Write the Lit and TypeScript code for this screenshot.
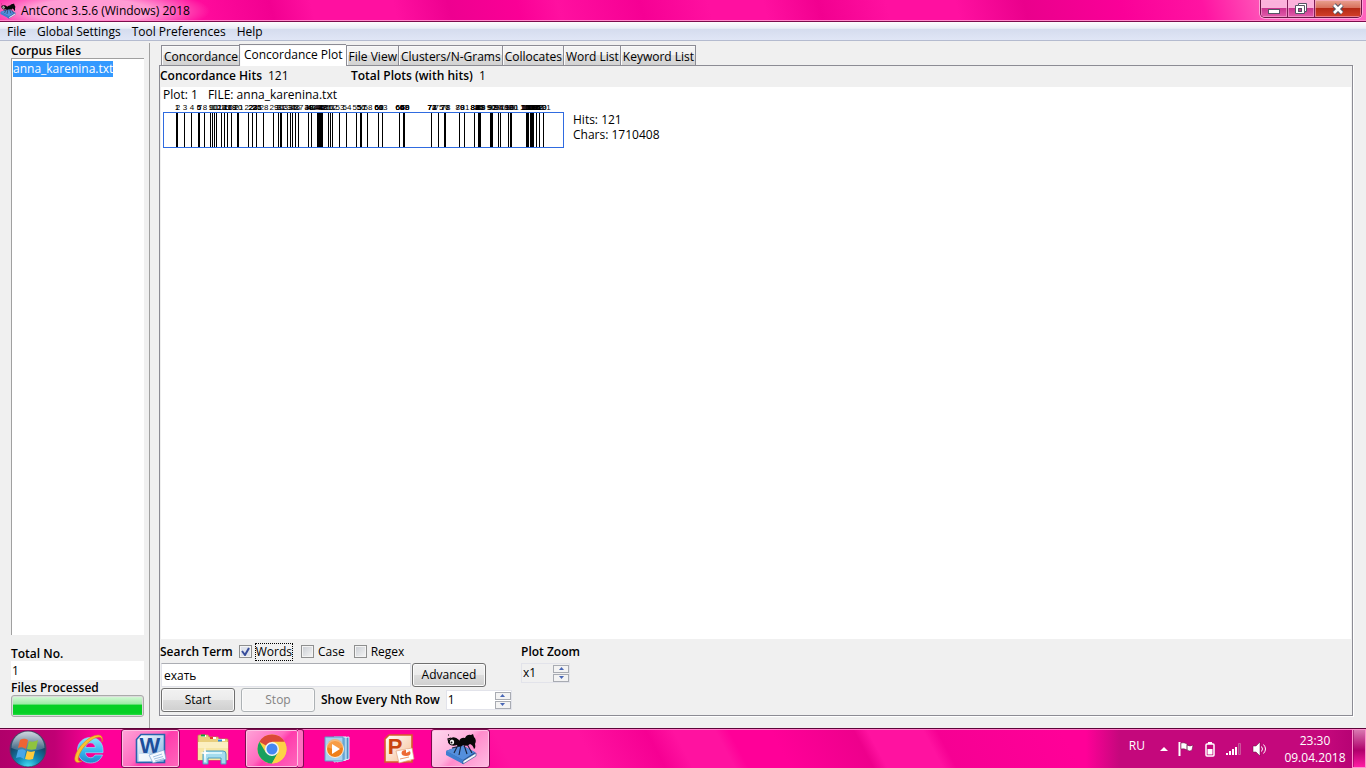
import { LitElement, html, svg, css } from "lit";
import { customElement, state } from "lit/decorators.js";

const HITS = [
  176, 177, 184, 191, 198, 198, 199, 204, 210, 212, 214, 216, 221, 221, 224, 227, 227, 231, 231, 237, 238,
  248, 252, 252, 256, 256, 256, 263, 273, 278, 280, 281, 287, 290, 292, 295, 298, 308, 308, 308, 311, 311,
  317, 318, 319, 320, 321, 322, 322, 328, 330, 332, 339, 346, 356, 360, 361, 367, 378, 378, 378, 378, 382,
  399, 399, 399, 403, 404, 404, 404, 431, 431, 431, 431, 438, 444, 444, 445, 459, 459, 464, 474, 474, 474,
  478, 479, 479, 480, 480, 490, 491, 491, 492, 498, 498, 500, 508, 508, 510, 510, 511, 526, 526, 527, 527,
  528, 528, 530, 530, 531, 531, 532, 532, 533, 533, 533, 536, 536, 539, 539, 543,
].map((x) => x - 163);

const TABS = ["Concordance", "Concordance Plot", "File View", "Clusters/N-Grams", "Collocates", "Word List", "Keyword List"];

const antIcon = (size: number) => html`<svg width=${size} height=${size} viewBox="0 0 32 32" aria-hidden="true">
  <path d="M1 18 17 12 31 20 18 31Z" fill="#24579f" />
  <path d="M1 18v4l17 9v-4Z" fill="#3f7fd0" />
  <path d="m18 28 13-8v3l-13 8Z" fill="#f4f7fb" stroke="#234a86" stroke-width=".6" />
  <path d="M1 18 16 12l14 7-12 8Z" fill="#548fdc" />
  <path d="M13 12 9 20M16 12l-2 10M19 12l3 9M22 11l5 9M15 13l-8 2" stroke="#18253c" stroke-width="1.100" fill="none" />
  <path d="M14 8q2-4 6-3 2-4 6-3l2-1 1 3q3 3 1 7 1 4-1 5-1-4-4-5-3 3-7 1-3 3-6 0-5 2-8-1-2-3 2-6 4-2 8 2Z" fill="#080808" />
  <path d="M4 10 3 6l3-1M3 2h1" fill="none" stroke="#080808" stroke-width="1.200" />
  <ellipse cx="7" cy="9" rx="2.200" ry="2.600" fill="#f8f8f8" />
  <circle cx="6.500" cy="9.400" r="1" fill="#111" />
</svg>`;

const orb = html`<svg width="38" height="38" viewBox="0 0 38 38" aria-hidden="true">
  <defs>
    <radialGradient id="orb" cx=".5" cy="1" r=".9">
      <stop offset="0" stop-color="#48e4f6" /><stop offset=".35" stop-color="#1289b8" />
      <stop offset=".75" stop-color="#174468" /><stop offset="1" stop-color="#365a7b" />
    </radialGradient>
    <linearGradient id="gloss" x2="0" y2="1"><stop offset="0" stop-color="#fff" stop-opacity=".75" /><stop offset="1" stop-color="#fff" stop-opacity=".15" /></linearGradient>
  </defs>
  <circle cx="19" cy="19" r="18" fill="url(#orb)" stroke="#50405f" />
  <path d="M2.500 18a16.500 16.500 0 0 1 33 0C27 22 11 22 2.500 18Z" fill="url(#gloss)" />
  <path d="M11 10c3-2 6-1 8 0l-2 9c-3-2-6-2-8-1Z" fill="#ef6434" />
  <path d="M20 11c3 1 5 1 9-1l-2 9c-3 1-6 1-9 0Z" fill="#8fc43f" />
  <path d="M9 20c3-1 6-1 8 1l-2 8c-3-2-5-2-8-1Z" fill="#48a6e8" />
  <path d="M18 21c3 1 5 1 8 0l-2 8c-3 1-5 1-8 0Z" fill="#ffcb3c" />
</svg>`;

const ieIcon = html`<svg width="32" height="32" viewBox="0 0 32 32" aria-hidden="true">
  <defs><linearGradient id="ie" x2="0" y2="1"><stop offset="0" stop-color="#8ae4fc" /><stop offset=".55" stop-color="#35b6ee" /><stop offset="1" stop-color="#1d86cc" /></linearGradient></defs>
  <path d="M30 17.500c0-8-5-13-12.500-13S4.500 10 4.500 17 9.500 30 17.500 30c6 0 10-3 12-8h-7.500c-1 2-2.500 2.700-4.500 2.700-3 0-5-2-5-5H30ZM12.500 14.500c.4-3 2.300-4.700 5-4.700s4.500 1.700 4.900 4.700Z" fill="url(#ie)" fill-rule="evenodd" stroke="#8fe0fa" stroke-width=".7" />
  <path d="M29 9c1-4 0-7-4-7C17 2 4 14 2 24c-1 5 2 7 7 4-3 1-4.500-.5-3.500-4C8 15 19 4 26 4c2.500 0 3.400 2 3 5Z" fill="#fdc130" stroke="#d88a10" stroke-width=".6" />
</svg>`;

const wordIcon = html`<svg width="32" height="32" viewBox="0 0 32 32" aria-hidden="true">
  <defs><linearGradient id="wd" x2="1" y2="1"><stop offset="0" stop-color="#fff" /><stop offset="1" stop-color="#7fb2e4" /></linearGradient></defs>
  <path d="M6 1.500h23.500v28h-28v-23Z" fill="url(#wd)" stroke="#2763ad" stroke-width="1.600" />
  <path d="M4 21h20v7H4Z" fill="#fff" opacity=".8" />
  <text x="15" y="20" text-anchor="middle" class="glyph word">W</text>
  <path d="m14 22 15-5 2 9-13 4Z" fill="#f5f9ff" stroke="#7ba3ce" stroke-width=".7" />
  <path d="m18 24 9-3M19 26l9-2.500M20 28l9-2.500" stroke="#8db3dc" stroke-width=".8" />
</svg>`;

const folderIcon = html`<svg width="34" height="32" viewBox="0 0 34 32" aria-hidden="true">
  <path d="M2 3q0-1 1-1h9l1 2h9l1 2h8q1 0 1 1v20H2Z" fill="#e9cf7d" stroke="#b99a48" stroke-width=".8" />
  <path d="M5 2h5v2H5ZM14 4h6v2h-6ZM22 6h7v2h-7Z" fill="#fff" />
  <path d="M5 1.500h4v2H5Z" fill="#13a431" /><path d="M14 4h3v2h-3Z" fill="#e33e25" /><path d="M22 6.500h4v2h-4Z" fill="#2a8bdc" />
  <path d="M2 9h30v18H2Z" fill="#f7e6a4" /><path d="M2 9h30v6H2Z" fill="#fbefc0" />
  <path d="M7 31V21q0-3 3-3h17q3 0 3 3v10h-5v-6H12v6Z" fill="#a4dcee" stroke="#4d9fbe" />
  <path d="M9 29v-8q0-1 2-1h15" stroke="#e8fbff" stroke-width="1.500" fill="none" />
  <path d="m9 14 1 5 4 1-4 1-1 5-1-5-4-1 4-1Z" fill="#fff" />
</svg>`;

const chromeIcon = html`<svg width="32" height="32" viewBox="0 0 32 32" aria-hidden="true">
  <circle cx="16" cy="16" r="14.500" fill="#fdd246" />
  <path d="M16 16 3.400 8.800A14.500 14.500 0 0 1 28.600 8.800H16Z" fill="#db4839" />
  <path d="M3.400 8.800A14.500 14.500 0 0 0 16 30.500L22 19.800 16 16 9.800 19.600Z" fill="#18a05e" />
  <path d="M16 9.200h12.800A14.500 14.500 0 0 1 16 30.500l6-11Z" fill="#fdd246" />
  <circle cx="16" cy="16" r="7" fill="#f4f4f4" /><circle cx="16" cy="16" r="5.500" fill="#4587f3" />
</svg>`;

const playerIcon = html`<svg width="28" height="28" viewBox="0 0 28 28" aria-hidden="true">
  <path d="m14 3 12-1v22l-12 3Z" fill="#4c8fc4" stroke="#dff1fd" />
  <path d="m11 2 12 0v23l-12 2Z" fill="#72b0dc" stroke="#eaf7ff" />
  <path d="M2 2h18v24H2Z" fill="#a9d2ee" stroke="#5c9bc7" />
  <circle cx="12" cy="14" r="8.500" fill="#f08019" stroke="#fff0dc" />
  <path d="M4 12a8 8 0 0 1 16 0q-8 4-16 0" fill="#f9a95a" opacity=".7" />
  <path d="m9 9 8 5-8 5Z" fill="#fff" />
</svg>`;

const pptIcon = html`<svg width="32" height="32" viewBox="0 0 32 32" aria-hidden="true">
  <defs><linearGradient id="pp" x2="1" y2="1"><stop offset="0" stop-color="#fff" /><stop offset="1" stop-color="#f7bd91" /></linearGradient></defs>
  <path d="M6 2h23v27H2V6Z" fill="url(#pp)" stroke="#d65d28" stroke-width="1.600" />
  <text x="12" y="21" text-anchor="middle" class="glyph ppt">P</text>
  <path d="m13 18 16-3 2 11-15 4Z" fill="#fff" stroke="#e2a47e" stroke-width=".7" />
  <ellipse cx="23" cy="20" rx="4.500" ry="3" fill="#ed6a35" /><path d="M23 20v-4l4 2Z" fill="#fff" />
  <path d="m17 26 9-2" stroke="#ee9a70" />
</svg>`;

const stepper = html`<span class="arrows">
  <button aria-label="Increase"><svg width="5" height="3" viewBox="0 0 5 3"><path d="M0 3 2.500 0 5 3Z" fill="#4866b5" /></svg></button>
  <button aria-label="Decrease"><svg width="5" height="3" viewBox="0 0 5 3"><path d="M0 0h5L2.500 3Z" fill="#4866b5" /></svg></button>
</span>`;

@customElement("app-root")
export class AppRoot extends LitElement {
  @state() private active = 1;

  static styles = css`
    :host {
      display: flex;
      flex-direction: column;
      height: 100vh;
      overflow: hidden;
      background: #f0f0f0;
      color: #000;
      font: 12px/16px "Open Sans", "Noto Sans", sans-serif;
    }
    * { box-sizing: border-box; }
    button, input { font: inherit; color: inherit; margin: 0; }
    svg { display: block; flex: none; }
    .bold, b { font-weight: 600; }

    .titlebar {
      display: flex;
      justify-content: space-between;
      height: 22px;
      flex: none;
      border-bottom: 1px solid #7c0c4c;
      box-shadow: inset 0 -1px #ff86ca;
      background:
        radial-gradient(ellipse 120px 24px at 90px 11px, #ff9cd4 0 50%, #ff9cd400 100%),
        linear-gradient(75deg, #ff0b9c 0 15%, #f20091 20%, #ff10a0 23% 29%, #ee0090 33%, #fa0096 38%, #ff10a0 41%, #f60094 47%, #ff10a0 52% 56%, #f20090 60%, #ff10a0 65%, #ff10a0 70%, #ea008c 75%, #fa0098 82%, #ff14a2 88%, #ff5ebc 93%, #ff62be 100%);
    }
    .caption { display: flex; gap: 5px; line-height: 21px; }
    .caption svg { margin-top: 3px; }
    .winbtns {
      display: flex;
      height: 18px;
      margin-right: 4px;
      border: 1px solid #6a1747;
      border-top: 0;
      border-radius: 0 0 5px 5px;
      box-shadow: 0 0 0 1px #ffa6da;
      overflow: hidden;
    }
    .winbtns button {
      display: grid;
      place-items: center;
      width: 27px;
      padding: 0;
      border: 0;
      border-right: 1px solid #7c1c56;
      background: linear-gradient(#fbb2dc 0 48%, #c9368f 50%, #e25cab);
      box-shadow: inset 0 0 0 1px #ffb5de88;
    }
    .winbtns .close {
      width: 46px;
      border-right: 0;
      background: linear-gradient(#e9a392, #d8705c 46%, #b52a16 50%, #d4402a);
    }

    .menubar {
      display: flex;
      height: 19px;
      flex: none;
      gap: 11px;
      padding: 0 7px;
      border-bottom: 1px solid #b4bbcf;
      background: linear-gradient(#fdfdfe 0, #e9edf6 35%, #d5dcee 40%, #e0e6f6);
    }
    .menubar button { padding: 1px 0 0; border: 0; background: none; line-height: 18px; }

    .main { display: flex; flex: 1; min-height: 0; }
    .side {
      display: flex;
      flex-direction: column;
      width: 150px;
      flex: none;
      margin-top: 2px;
      padding: 0 5px 11px 11px;
      border-right: 1px solid #a0a0a0;
    }
    .side .bold { height: 15px; }
    .files {
      flex: 1;
      margin: 0 0 11px;
      padding: 2px 1px;
      border: solid #a0a0a0;
      border-width: 1px 0 0 1px;
      background: #fff;
      list-style: none;
    }
    .files span { display: inline-block; background: #3399ff; color: #fff; }
    .total {
      width: 100%;
      height: 19px;
      padding: 0 1px;
      border: 0;
      background: #fff;
    }
    progress {
      appearance: none;
      width: 100%;
      height: 22px;
      border: 1px solid #aaa;
      border-radius: 3px;
      padding: 1px;
      background: #dcdcdc;
    }
    progress::-webkit-progress-bar { background: #ddd; }
    progress::-webkit-progress-value {
      background: linear-gradient(#d2f7d4 0, #9ceba4 40%, #06d025 44%, #06d025 90%, #2cdc48);
    }

    .content {
      display: flex;
      flex-direction: column;
      flex: 1;
      min-width: 0;
      padding: 3px 13px 12px 9px;
    }
    .tabs { display: flex; align-items: flex-end; padding-left: 2px; height: 21px; }
    .tabs button {
      height: 20px;
      padding: 1px 1px 0 2px;
      border: 1px solid #8c8c94;
      border-right-width: 0;
      border-bottom: 0;
      background: linear-gradient(#f3f3f3 0 45%, #dedede 50%, #d2d2d2);
      box-shadow: inset 1px 1px #fafafa;
      line-height: 20px;
      white-space: nowrap;
    }
    .tabs button:last-child { border-right-width: 1px; }
    .tabs button.active {
      position: relative;
      height: 22px;
      margin-bottom: -1px;
      padding: 0 3px 1px 4px;
      background: #fff;
    }
    .panel {
      display: flex;
      flex-direction: column;
      flex: 1;
      border: 1px solid #8c8c94;
      box-shadow: 1px 1px #fff;
      min-height: 0;
    }
    .counts { display: grid; grid-template-columns: 108px 83px 128px auto; justify-content: start; height: 21px; line-height: 20px; }
    .canvas {
      flex: 1;
      margin: 0 1px;
      padding: 0 2px;
      background: #fff;
      overflow: hidden;
    }
    .plot-title { display: flex; gap: 10px; height: 16px; }
    .plot-row { display: flex; gap: 8px; }
    .plot-row svg { overflow: visible; }
    .plot-info { padding-top: 9px; line-height: 15px; }
    .tick { font: 8px "Liberation Sans", sans-serif; }
    .controls {
      display: grid;
      grid-template-columns: 361px auto;
      justify-content: start;
      align-items: start;
      padding: 4px 0 3px;
    }
    .row { display: flex; align-items: center; height: 17px; }
    .row label { display: flex; align-items: center; margin-right: 9px; }
    .row b { margin-right: 6px; }
    .row input {
      appearance: none;
      width: 13px;
      height: 13px;
      margin-right: 4px;
      border: 1px solid #8e8f8f;
      background: linear-gradient(135deg, #c8ccd2, #f6f6f6);
      box-shadow: inset 0 0 0 1px #f4f4f4;
    }
    .row input:checked {
      background: url("data:image/svg+xml,%3Csvg xmlns='http://www.w3.org/2000/svg' viewBox='0 0 11 11'%3E%3Cpath d='m2 5 3 4 4-7' fill='none' stroke='%23364c9b' stroke-width='2'/%3E%3C/svg%3E") #dfe3ec;
    }
    .row .focus { outline: 1px dotted #000; }
    .row2 { display: flex; gap: 1px; padding: 3px 0 1px 1px; }
    .query { width: 250px; height: 24px; padding: 0 2px; border: 1px solid #e2e3ea; border-top-color: #abadb3; background: #fff; outline: 0; }
    .push {
      width: 74px;
      height: 24px;
      padding: 0;
      border: 1px solid #707070;
      border-radius: 3px;
      background: linear-gradient(#f2f2f2, #ebebeb 48%, #dddddd 50%, #cfcfcf);
      box-shadow: inset 0 0 0 1px #fbfbfb;
    }
    .push:disabled { color: #838383; border-color: #adb2b5; background: #f4f4f4; }
    .row3 { display: flex; align-items: center; gap: 6px; padding-left: 1px; }
    .spin {
      display: flex;
      align-items: center;
      height: 20px;
      width: 66px;
      border: 1px solid #e2e3ea;
      background: #fff;
    }
    .spin input { flex: 1; width: 0; padding: 0 1px; border: 0; background: none; outline: 0; height: 16px; }
    .spin.zoom { width: 49px; background: #f0f0f0; margin-top: 3px; }
    .arrows { display: flex; flex-direction: column; gap: 1px; }
    .arrows button {
      display: grid;
      place-items: center;
      width: 16px;
      height: 8px;
      padding: 0;
      border: 1px solid #a8abb2;
      background: #f3f3f3;
    }

    .taskbar {
      display: flex;
      height: 40px;
      flex: none;
      padding-left: 8px;
      border-top: 1px solid #5c0438;
      box-shadow: inset 0 1px #ff7cc8;
      color: #fff;
      background:
        linear-gradient(90deg, #b0006a 0, #c00074 4%, #ff009600 7%, #ff009600 79.500%, #c4087c 82%, #c4087c 97%, #b00070),
        linear-gradient(62deg, #ff0098 0 34%, #ff12a0 37% 43%, #f60093 48%, #ff12a0 50% 53%, #ff0098 54% 57%, #ee008c 63%, #ff12a0 64% 68%, #f60093 69%, #ff0098 78%);
    }
    .taskbar > button {
      display: grid;
      place-items: center;
      width: 59px;
      height: 39px;
      margin-right: 3px;
      padding: 0;
      border: 1px solid transparent;
      background: none;
    }
    .taskbar > .start { width: 38px; margin-right: 13px; }
    .taskbar > .open {
      border-color: #7d0d50;
      border-radius: 3px;
      box-shadow: inset 0 0 0 1px #ffc0e4;
      background: linear-gradient(135deg, #ffa4d8, #ff6cc0 45%, #ff3cac 55%, #ff68bc);
    }
    .taskbar > .current { background: linear-gradient(135deg, #ffd8ef, #ffb2dd 45%, #ff8bcb 55%, #ffbce2); }
    .taskbar > .stack { position: relative; width: 54px; margin-right: 8px; }
    .taskbar > .stack::after {
      content: "";
      position: absolute;
      inset: -1px -6px -1px auto;
      width: 5px;
      border: 1px solid #7d0d50;
      border-left: 0;
      border-radius: 0 3px 3px 0;
      background: #ff6cc0;
    }
    .glyph { font-family: "Liberation Sans", sans-serif; font-weight: 700; }
    .word { font-size: 22px; fill: #1c4f9c; }
    .ppt { font-size: 22px; fill: #c9430f; }
    .tray { display: flex; margin-left: auto; align-items: center; gap: 10px; }
    .lang { margin: -6px 5px 0 0; }
    .clock { display: block; width: 74px; text-align: center; line-height: 17px; padding-top: 1px; }
    .taskbar .desktop {
      width: 14px;
      height: 39px;
      margin: 0 0 0 -10px;
      padding: 0;
      border: 1px solid #ff8fce;
      background: linear-gradient(#d878b0, #b0006c 55%, #ff1ca4);
      box-shadow: inset 1px 0 #84045080;
    }
  `;

  private plot() {
    return html`<svg width="402" height="45" viewBox="0 0 402 45" role="img" aria-label="Concordance plot">
      ${HITS.map((x, i) => svg`<text class="tick" x=${x + 1} y="7" text-anchor="middle">${i + 1}</text>`)}
      ${[...new Set(HITS)].map((x) => svg`<rect x=${x} y="10" width="1" height="34" fill="#000" />`)}
      <rect x=".5" y="9.500" width="400" height="35" fill="none" stroke="#2f6be0" />
    </svg>`;
  }

  render() {
    return html`
      <header class="titlebar">
        <div class="caption">${antIcon(16)}<span>AntConc 3.5.6 (Windows) 2018</span></div>
        <div class="winbtns">
          <button aria-label="Minimize"><svg width="12" height="14" viewBox="0 0 12 14"><rect x=".5" y="7.500" width="11" height="4" fill="#fff" stroke="#555565" /></svg></button>
          <button aria-label="Restore"><svg width="12" height="14" viewBox="0 0 12 14"><path d="M3.500 1.500h8v8h-2v2h-9v-8h3Z" fill="#fff" stroke="#555565" /><path d="M3.500 3.500h6v6" fill="none" stroke="#555565" /><rect x="3.500" y="6.500" width="3" height="3" fill="#c9368f" stroke="#555565" /></svg></button>
          <button class="close" aria-label="Close"><svg width="12" height="14" viewBox="0 0 12 14"><path d="m2 3 8 8m0-8-8 8" stroke="#555565" stroke-width="4.600" /><path d="m2 3 8 8m0-8-8 8" stroke="#fff" stroke-width="2.600" /></svg></button>
        </div>
      </header>
      <nav class="menubar">
        ${["File", "Global Settings", "Tool Preferences", "Help"].map((m) => html`<button>${m}</button>`)}
      </nav>
      <main class="main">
        <aside class="side">
          <span class="bold">Corpus Files</span>
          <ul class="files"><li><span>anna_karenina.txt</span></li></ul>
          <label class="bold" for="total">Total No.</label>
          <input id="total" class="total" .value=${"1"} readonly />
          <label class="bold" for="progress">Files Processed</label>
          <progress id="progress" value="1" max="1"></progress>
        </aside>
        <section class="content">
          <div class="tabs" role="tablist">
            ${TABS.map((t, i) => html`<button role="tab" aria-selected=${i === this.active} class=${i === this.active ? "active" : ""} @click=${() => (this.active = i)}>${t}</button>`)}
          </div>
          <div class="panel" role="tabpanel">
            <div class="counts"><b>Concordance Hits</b><span>121</span><b>Total Plots (with hits)</b><span>1</span></div>
            <div class="canvas">
              <div class="plot-title"><span>Plot: 1</span><span>FILE: anna_karenina.txt</span></div>
              <div class="plot-row">
                ${this.plot()}
                <div class="plot-info">Hits: 121<br />Chars: 1710408</div>
              </div>
            </div>
            <div class="controls">
              <div>
                <div class="row">
                  <b>Search Term</b>
                  <label><input type="checkbox" checked /><span class="focus">Words</span></label>
                  <label><input type="checkbox" />Case</label>
                  <label><input type="checkbox" />Regex</label>
                </div>
                <div class="row2">
                  <input class="query" aria-label="Search term" .value=${"ехать"} />
                  <button class="push">Advanced</button>
                </div>
                <div class="row3">
                  <button class="push">Start</button>
                  <button class="push" disabled>Stop</button>
                  <label class="bold" for="nth">Show Every Nth Row</label>
                  <span class="spin"><input id="nth" .value=${"1"} />${stepper}</span>
                </div>
              </div>
              <div>
                <div class="row"><label class="bold" for="zoom">Plot Zoom</label></div>
                <span class="spin zoom"><input id="zoom" .value=${"x1"} />${stepper}</span>
              </div>
            </div>
          </div>
        </section>
      </main>
      <footer class="taskbar">
        <button class="start" aria-label="Start menu">${orb}</button>
        <button aria-label="Internet Explorer">${ieIcon}</button>
        <button class="open" aria-label="Word">${wordIcon}</button>
        <button aria-label="Explorer">${folderIcon}</button>
        <button class="open stack" aria-label="Chrome">${chromeIcon}</button>
        <button aria-label="Media Player">${playerIcon}</button>
        <button aria-label="PowerPoint">${pptIcon}</button>
        <button class="open current" aria-label="AntConc">${antIcon(32)}</button>
        <div class="tray">
          <span class="lang">RU</span>
          <svg width="8" height="4" viewBox="0 0 8 4"><path d="M0 4 4 0l4 4Z" fill="#fff" /></svg>
          <svg width="16" height="16" viewBox="0 0 16 16"><path d="M1.500 1v14" stroke="#fff" stroke-width="2" /><path d="M3 2q3-1 6 1v6q-3-2-6-1ZM9 4q3 2 6 0l-1 5q-2 2-5 0Z" fill="#fff" stroke="#60103f" stroke-width=".5" /></svg>
          <svg width="12" height="16" viewBox="0 0 12 16"><path d="M4 1h4v2H4Z" fill="#fff" /><rect x="2" y="3" width="8" height="12" rx="1" fill="none" stroke="#fff" stroke-width="1.500" /><path d="M3.500 8h5v5.500h-5Z" fill="#fff" /></svg>
          <svg width="16" height="14" viewBox="0 0 16 14"><path d="M0 11h2v2H0ZM3 9h2v4H3ZM6 7h2v6H6ZM9 5h2v8H9Z" fill="#fff" /><path d="M12.500 1.500h2v11h-2Z" fill="#a04080" stroke="#e070b0" stroke-width=".6" /></svg>
          <svg width="16" height="16" viewBox="0 0 16 16"><path d="M1 5h3l4-4v14l-4-4H1Z" fill="#fff" stroke="#60103f" stroke-width=".5" /><path d="M9.500 5.500q2 2.500 0 5M11.500 3.500q4 4.500 0 9" fill="none" stroke="#fff" /></svg>
          <time class="clock">23:30<br />09.04.2018</time>
          <button class="desktop" aria-label="Show desktop"></button>
        </div>
      </footer>
    `;
  }
}
